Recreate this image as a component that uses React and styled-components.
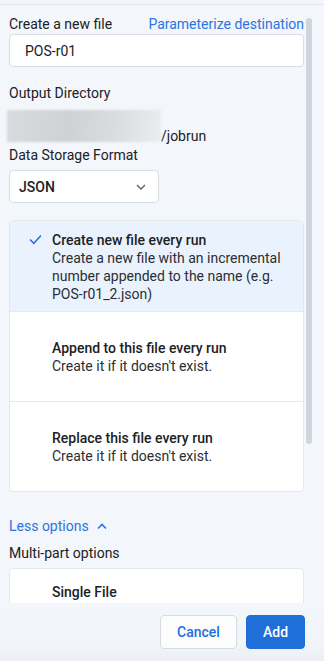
import React from "react";
import styled, { createGlobalStyle } from "styled-components";

const Global = createGlobalStyle`
  html, body { margin: 0; padding: 0; background: #f3f6fb; }
  body { font-family: Roboto, "Noto Sans", sans-serif; color: #202124; }
  * { box-sizing: border-box; }
`;

const Page = styled.div`
  width: 324px;
  height: 657px;
  margin-top: 4px;
  display: flex;
  flex-direction: column;
  background: #f3f6fb;
  border-top: 1px solid #e3e8f0;
`;

const ScrollArea = styled.div`
  position: relative;
  flex: 1;
  min-height: 0;
  overflow: hidden;
  display: flex;
`;

const Content = styled.div`
  width: 304px;
  padding: 9px 0 0 9px;
  display: flex;
  flex-direction: column;
  & > * { flex-shrink: 0; }
`;

const Track = styled.div`
  position: absolute;
  right: 12px;
  top: 13px;
  width: 6px;
  height: 426px;
  border-radius: 3px;
  background: #cfd6df;
`;

const LabelRow = styled.div`
  display: flex;
  justify-content: space-between;
  align-items: baseline;
  width: 295px;
  height: 20px;
`;

const Label = styled.div`
  font-size: 14px;
  line-height: 20px;
  color: #202124;
  margin-top: ${(p) => p.$mt || 0}px;
`;

const Link = styled.span`
  font-size: 14px;
  color: #2b74e2;
`;

const Input = styled.div`
  width: 295px;
  height: 33px;
  background: #fff;
  border: 1px solid #d9dee5;
  border-radius: 4px;
  padding-left: 15px;
  display: flex;
  align-items: center;
  font-size: 14px;
`;

const PathRow = styled.div`
  display: flex;
  align-items: flex-end;
  height: 32px;
  margin-top: 7px;
  margin-left: -2px;
`;

const Blur = styled.div`
  width: 154px;
  height: 32px;
  background: linear-gradient(100deg, #d9dbde 0%, #cfd1d4 40%, #dadcdf 70%, #ebedf0 100%);
  filter: blur(1px);
`;

const PathText = styled.span`
  font-size: 14px;
  line-height: 16px;
  margin-bottom: -2px;
`;

const Select = styled.div`
  width: 150px;
  height: 33px;
  margin-top: 5px;
  background: #fff;
  border: 1px solid #d9dee5;
  border-radius: 4px;
  padding: 0 12px 0 9px;
  display: flex;
  align-items: center;
  justify-content: space-between;
  font-size: 14px;
  font-weight: 500;
`;

const Card = styled.div`
  width: 295px;
  margin-top: ${(p) => p.$mt || 0}px;
  background: #fff;
  border: 1px solid #e3e8ef;
  border-radius: 5px;
  overflow: hidden;
`;

const Option = styled.div`
  display: grid;
  grid-template-columns: 42px 1fr;
  padding: ${(p) => p.$pad};
  min-height: 90px;
  background: ${(p) => (p.$selected ? "#eaf3fd" : "#fff")};
  border-top: ${(p) => (p.$first ? "none" : "1px solid #e6eaf0")};
  align-content: ${(p) => (p.$top ? "start" : "center")};
`;

const CheckCell = styled.div`
  display: flex;
  justify-content: flex-end;
  padding-right: 10px;
  padding-top: 3px;
`;

const OptTitle = styled.div`
  font-size: 14px;
  line-height: 18px;
  font-weight: 500;
  color: #202124;
`;

const OptDesc = styled.div`
  font-size: 14px;
  line-height: 18px;
  color: #2b2e33;
  padding-right: 20px;
`;

const Toggle = styled.div`
  display: flex;
  align-items: center;
  gap: 8px;
  margin-top: 24px;
  color: #2b74e2;
  font-size: 14px;
  line-height: 20px;
`;

const Footer = styled.div`
  height: 58px;
  flex-shrink: 0;
  display: flex;
  justify-content: flex-end;
  align-items: flex-start;
  gap: 9px;
  padding: 12px 19px 0 0;
  background: linear-gradient(180deg, #f3f6fb 0%, #f1f4f8 70%, #eceff4 100%);
`;

const Button = styled.button`
  height: 34px;
  padding: 0;
  border-radius: 4px;
  font-family: Roboto, sans-serif;
  font-size: 14px;
  font-weight: 500;
  border: 1px solid ${(p) => (p.$primary ? "#1f6fd8" : "#d5dbe3")};
  background: ${(p) => (p.$primary ? "#1f6fd8" : "#fdfdfe")};
  color: ${(p) => (p.$primary ? "#fff" : "#1f6fd8")};
  width: ${(p) => p.$w}px;
`;

const options = [
  {
    title: "Create new file every run",
    desc: "Create a new file with an incremental number appended to the name (e.g. POS-r01_2.json)",
    selected: true,
  },
  { title: "Append to this file every run", desc: "Create it if it doesn't exist." },
  { title: "Replace this file every run", desc: "Create it if it doesn't exist." },
];

export default function App() {
  return (
    <>
      <Global />
      <Page>
        <ScrollArea>
          <Content>
            <LabelRow>
              <Label>Create a new file</Label>
              <Link>Parameterize destination</Link>
            </LabelRow>
            <Input>POS-r01</Input>
            <Label $mt={16}>Output Directory</Label>
            <PathRow>
              <Blur />
              <PathText>/jobrun</PathText>
            </PathRow>
            <Label $mt={3}>Data Storage Format</Label>
            <Select>
              JSON
              <svg width="10" height="6" viewBox="0 0 10 6">
                <path d="M1 1l4 4 4-4" fill="none" stroke="#5f6368" strokeWidth="1.4" />
              </svg>
            </Select>
            <Card $mt={17}>
              {options.map((o, i) => (
                <Option
                  key={o.title}
                  $first={i === 0}
                  $selected={o.selected}
                  $top={o.selected}
                  $pad={o.selected ? "10px 0 8px 0" : "0"}
                >
                  <CheckCell>
                    {o.selected && (
                      <svg width="13" height="11" viewBox="0 0 13 11">
                        <path d="M1 5.5l3.8 3.8L12 1.5" fill="none" stroke="#2b74e2" strokeWidth="1.6" />
                      </svg>
                    )}
                  </CheckCell>
                  <div>
                    <OptTitle>{o.title}</OptTitle>
                    <OptDesc>{o.desc}</OptDesc>
                  </div>
                </Option>
              ))}
            </Card>
            <Toggle>
              Less options
              <svg width="10" height="7" viewBox="0 0 10 7">
                <path d="M1 5.5l4-4 4 4" fill="none" stroke="#2b74e2" strokeWidth="1.6" />
              </svg>
            </Toggle>
            <Label $mt={7}>Multi-part options</Label>
            <Card $mt={5}>
              <Option $first $top $pad="14px 0 0 0">
                <CheckCell />
                <div>
                  <OptTitle>Single File</OptTitle>
                  <OptDesc>Create one single file output</OptDesc>
                </div>
              </Option>
            </Card>
          </Content>
          <Track />
        </ScrollArea>
        <Footer>
          <Button $w={77}>Cancel</Button>
          <Button $primary $w={59}>Add</Button>
        </Footer>
      </Page>
    </>
  );
}
